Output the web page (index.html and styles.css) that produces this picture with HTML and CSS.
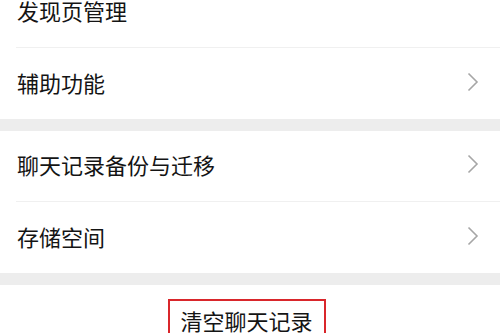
FILE: index.html
```html
<!DOCTYPE html>
<html>
<head>
  <meta charset="UTF-8">
  <title>设置</title>
  <link rel="stylesheet" href="styles.css">
</head>
<body>
  <div class="settings">
    <div class="group">
      <div class="row">
        <span class="label">发现页管理</span>
      </div>
      <div class="row">
        <span class="label">辅助功能</span>
        <svg class="chevron" viewBox="0 0 12 20"><path d="M1.5 1.5 L10 10 L1.5 18.5"/></svg>
      </div>
    </div>

    <div class="group">
      <div class="row">
        <span class="label">聊天记录备份与迁移</span>
        <svg class="chevron" viewBox="0 0 12 20"><path d="M1.5 1.5 L10 10 L1.5 18.5"/></svg>
      </div>
      <div class="row">
        <span class="label">存储空间</span>
        <svg class="chevron" viewBox="0 0 12 20"><path d="M1.5 1.5 L10 10 L1.5 18.5"/></svg>
      </div>
    </div>

    <div class="group bottom">
      <button class="clear-btn">清空聊天记录</button>
    </div>
  </div>
</body>
</html>
```

FILE: styles.css
```css
html, body {
  margin: 0;
  padding: 0;
  width: 500px;
  height: 333px;
  overflow: hidden;
  background-color: #ededed;
  font-family: "Noto Sans CJK SC", "Noto Sans", sans-serif;
  color: #141414;
}

/* 列表已向上滚动了一部分 */
.settings {
  margin-top: -23px;
}

.group {
  background-color: #fff;
  margin-bottom: 12px;
}

.row {
  display: flex;
  align-items: center;
  justify-content: space-between;
  height: 71px;
  margin-left: 16px;
  padding: 0 21px 4px 1px;
  border-bottom: 1px solid #f0f0f0;
  box-sizing: border-box;
}

.row:last-child {
  border-bottom: none;
}

.label {
  font-size: 22px;
  line-height: 1;
}

.chevron {
  width: 12px;
  height: 20px;
  fill: none;
  stroke: #a6a6a6;
  stroke-width: 1.6;
}

.bottom {
  display: flex;
  justify-content: center;
  padding-top: 14px;
  height: 80px;
  margin-bottom: 0;
}

/* 红框略微偏左 */
.clear-btn {
  width: 158px;
  height: 60px;
  margin-right: 7px;
  align-self: flex-start;
  background: #fff;
  border: 2px solid #d9262b;
  padding: 7px 0 0;
  font-family: inherit;
  font-size: 22px;
  line-height: 1.1;
  color: #141414;
  display: flex;
  justify-content: center;
  align-items: flex-start;
}
```
